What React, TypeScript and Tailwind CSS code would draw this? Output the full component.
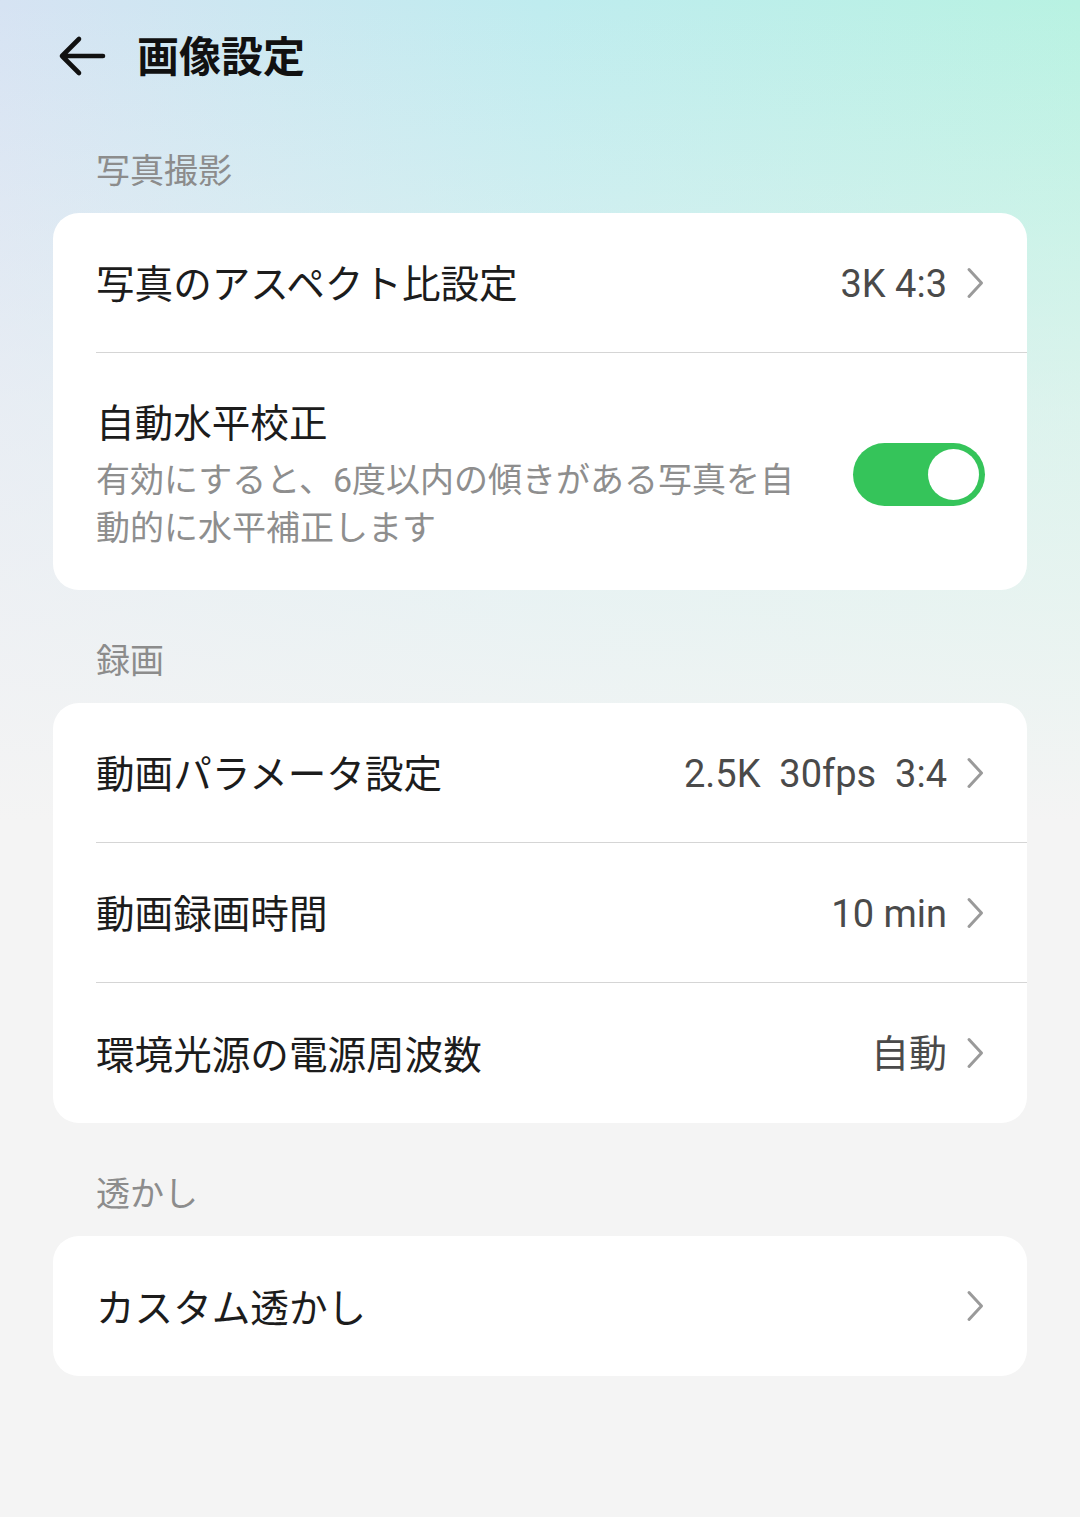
import React from "react";

const FONT = "font-['Roboto','Noto_Sans_CJK_JP',sans-serif]";

function BackArrow() {
  return (
    <svg width="50" height="42" viewBox="0 0 50 42" fill="none" className="shrink-0">
      <path
        d="M5 21 H46 M22 4 L5 21 L22 38"
        stroke="#111"
        strokeWidth="4.6"
        strokeLinecap="round"
        strokeLinejoin="round"
      />
    </svg>
  );
}

function Chevron() {
  return (
    <svg width="20" height="34" viewBox="0 0 20 34" fill="none" className="shrink-0">
      <path
        d="M4 3.5 L16.5 17 L4 30.5"
        stroke="#9a9a9a"
        strokeWidth="3"
        strokeLinecap="round"
        strokeLinejoin="round"
      />
    </svg>
  );
}

function Toggle({ on }: { on: boolean }) {
  return (
    <div
      className={
        "w-[132px] h-[63px] rounded-full flex items-center px-[6px] shrink-0 -mt-[3px] " +
        (on ? "bg-[#35c45a] justify-end" : "bg-[#d6d6d6] justify-start")
      }
    >
      <div className="w-[51px] h-[51px] rounded-full bg-white" />
    </div>
  );
}

function SectionLabel({ text, first }: { text: string; first?: boolean }) {
  return (
    <div
      className={
        "pl-[96px] pb-[20px] text-[34px] leading-[44px] text-[#8c8c8c] " +
        (first ? "pt-[37px]" : "pt-[49px]")
      }
    >
      {text}
    </div>
  );
}

function NavRow({
  label,
  value,
  divider,
}: {
  label: string;
  value?: string;
  divider?: boolean;
}) {
  return (
    <div className="pl-[43px]">
      <div
        className={
          "h-[140px] flex items-center pr-[42px] " +
          (divider ? "border-b-[1.5px] border-[#d5d5d5]" : "")
        }
      >
        <span className="flex-1 pt-[5px] text-[38.6px] text-[#1c1c1c] whitespace-nowrap">{label}</span>
        {value && (
          <span className="pt-[3px] text-[38px] text-[#4a4a4a] whitespace-pre mr-[18px]">{value}</span>
        )}
        <Chevron />
      </div>
    </div>
  );
}

function Card({ children }: { children: React.ReactNode }) {
  return (
    <div className="mx-[53px] bg-white rounded-[26px] overflow-hidden">{children}</div>
  );
}

export default function App() {
  return (
    <div className={"relative min-h-[1517px] bg-[#f4f4f4] overflow-hidden " + FONT}>
      {/* tinted header wash */}
      <div className="absolute inset-x-0 top-0 h-[820px] bg-gradient-to-r from-[#d6e3f3] via-[#bfecef] to-[#b8f2e2]" />
      <div className="absolute inset-x-0 top-0 h-[820px] bg-gradient-to-b from-transparent via-[#f4f4f4]/60 to-[#f4f4f4]" />

      <div className="relative">
        <header className="h-[112px] flex items-center pl-[57px] gap-[30px]">
          <BackArrow />
          <h1 className="text-[42px] font-semibold text-[#111] leading-none pt-[3px]">画像設定</h1>
        </header>

        <SectionLabel text="写真撮影" first />
        <Card>
          <NavRow label="写真のアスペクト比設定" value="3K 4:3" divider />
          <div className="pl-[43px] pr-[42px] pt-[46px] pb-[38px] flex items-center">
            <div className="flex-1">
              <div className="text-[38.6px] leading-[50px] text-[#1c1c1c]">自動水平校正</div>
              <div className="mt-[7px] w-[716px] text-[34px] leading-[48px] text-[#8e8e8e]">
                有効にすると、6度以内の傾きがある写真を自動的に水平補正します
              </div>
            </div>
            <Toggle on />
          </div>
        </Card>

        <SectionLabel text="録画" />
        <Card>
          <NavRow label="動画パラメータ設定" value="2.5K  30fps  3:4" divider />
          <NavRow label="動画録画時間" value="10 min" divider />
          <NavRow label="環境光源の電源周波数" value="自動" />
        </Card>

        <SectionLabel text="透かし" />
        <Card>
          <NavRow label="カスタム透かし" />
        </Card>
      </div>
    </div>
  );
}
